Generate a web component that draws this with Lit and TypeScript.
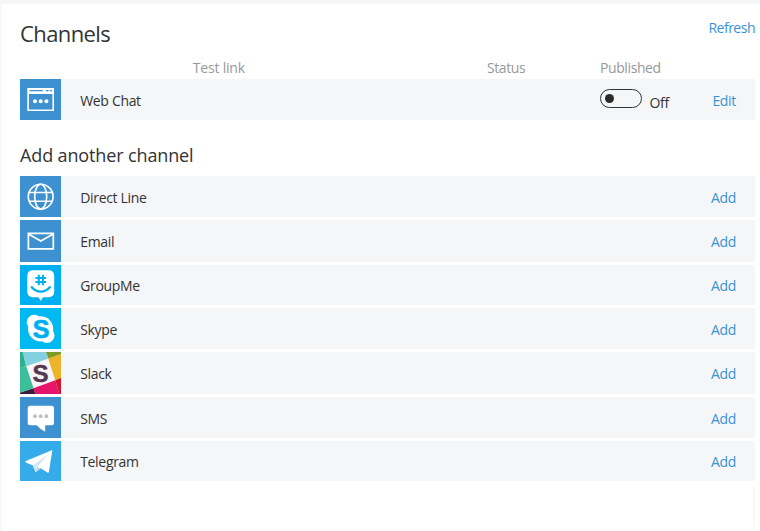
import { LitElement, html, css, svg } from "lit";
import { customElement, property } from "lit/decorators.js";

const icons: Record<string, unknown> = {
  webchat: svg`
    <rect width="41" height="42" fill="#3d91d1"/>
    <path d="M7.3 9H34V32H7.3Z M8.9 15V30.4H32.4V15Z" fill="#fff" fill-rule="evenodd"/>
    <path d="M9.5 11.7H22.8M26 11.7H28.6M29.8 11.7H32" stroke="#3d91d1" stroke-width="1.3"/>
    <g fill="#fff"><circle cx="15" cy="22.3" r="2"/><circle cx="20.7" cy="22.3" r="2"/><circle cx="26.4" cy="22.3" r="2"/></g>`,
  directline: svg`
    <rect width="41" height="42" fill="#3d91d1"/>
    <g fill="none" stroke="#fff" stroke-width="1.6">
      <circle cx="20.7" cy="20.7" r="12.4"/>
      <ellipse cx="20.7" cy="20.7" rx="6" ry="12.4"/>
      <path d="M9 16.5H32.4M9 25.3H32.4"/>
    </g>`,
  email: svg`
    <rect width="41" height="42" fill="#3d91d1"/>
    <path d="M8.4 13.3H33.3V28.9H8.4ZM8.4 14L20.8 21L33.3 14" fill="none" stroke="#fff" stroke-width="1.7"/>`,
  groupme: svg`
    <rect width="41" height="42" fill="#00aff0"/>
    <path d="M13 5.3H28.6Q34.2 5.3 34.2 11V26.6Q34.2 32.3 28.6 32.3H23.2L20.8 35.8L18.4 32.3H13Q7.3 32.3 7.3 26.6V11Q7.3 5.3 13 5.3Z" fill="#fff"/>
    <path d="M18.8 9.8V20.2M22.9 9.8V20.2M15.5 12.9H26.1M15.5 17.1H26.1" stroke="#00aff0" stroke-width="2"/>
    <path d="M11.8 22.3Q15.5 26.6 20.8 26.6T29.8 22.3" fill="none" stroke="#00aff0" stroke-width="2.4" stroke-linecap="round"/>`,
  skype: svg`
    <rect width="41" height="42" fill="#00b9f0"/>
    <g fill="#fff"><circle cx="20.6" cy="20.8" r="12.6"/><circle cx="14.2" cy="14.2" r="7.5"/><circle cx="27" cy="27.4" r="7.5"/></g>
    <text class="skype-s" x="20.9" y="29.6" text-anchor="middle">S</text>`,
  slack: svg`
    <rect width="41" height="42" fill="#f7f5f5"/>
    <path d="M0 0H3L6 14L0 16Z" fill="#2fb08c"/>
    <path d="M2.7 0H26L28.5 6.5L6.3 14.2Z" fill="#83d1de"/>
    <path d="M26 0H41V2.2L28.5 6.5Z" fill="#7f9a29"/>
    <path d="M28.2 6.6L41 2.2V26L35.3 28.2Z" fill="#ecb428"/>
    <path d="M35.3 28.2L41 26V42H39.3Z" fill="#d4152d"/>
    <path d="M13.5 36.2L35.3 28.2L39.5 42H15.3Z" fill="#e5156c"/>
    <path d="M0 40.5L13.5 36.2L15.3 42H0Z" fill="#41193f"/>
    <path d="M0 15.8L6.2 14L13.5 36.2L0 40.7Z" fill="#3cbf9a"/>
    <text class="slack-s" x="20.3" y="29.8" text-anchor="middle">S</text>`,
  sms: svg`
    <rect width="41" height="42" fill="#3d91d1"/>
    <path d="M10.2 8.8H31.5Q34 8.8 34 11.3V25.7Q34 28.2 31.5 28.2H25.2V34.7Q20.3 32.3 16.6 28.2H10.2Q7.7 28.2 7.7 25.7V11.3Q7.7 8.8 10.2 8.8Z" fill="#fff"/>
    <g fill="#b9bfc5"><circle cx="15" cy="19.2" r="1.9"/><circle cx="20.7" cy="19.2" r="1.9"/><circle cx="26.4" cy="19.2" r="1.9"/></g>`,
  telegram: svg`
    <rect width="41" height="42" fill="#36abe9"/>
    <path d="M5.2 20.3L32.4 9L28.8 31.2Q28.3 32.1 27.3 31.5L20.7 27.2L15.6 31.2L13 24.6L5.8 21.6Z" fill="#fff"/>
    <path d="M13 24.6L28.5 12.8L17.2 26L15.6 31.2Z" fill="#d6e5f1"/>
    <path d="M17.2 26L15.6 31.2L20.7 27.5Z" fill="#b9d4e8"/>`,
};

@customElement("channel-row")
export class ChannelRow extends LitElement {
  @property() name = "";
  @property() icon = "";
  @property() action = "Add";
  @property({ type: Boolean }) toggle = false;

  static styles = css`
    :host { display: grid; grid-template-columns: 60.2px 519.8px 1fr auto; align-items: center; background: #f5f6f8; padding-right: 19px; min-height: 0; overflow: hidden; }
    .icon { width: 41px; height: 100%; overflow: hidden; }
    .icon svg { display: block; width: 41px; height: 42px; }
    .name, .link { line-height: 20px; padding-top: 2px; }
    .link { color: #3b92d3; }
    .switch { display: flex; align-items: center; gap: 8px; }
    .track { box-sizing: border-box; width: 42px; height: 19px; border: 1.4px solid #333; border-radius: 10px; display: flex; align-items: center; padding-left: 4px; margin-top: -3px; }
    .knob { width: 9px; height: 9px; border-radius: 50%; background: #2b2b2b; }
    .state { line-height: 20px; padding-top: 7px; margin-left: -0.5px; }
    .skype-s { font: 700 25px "Liberation Sans", sans-serif; fill: #00aff0; stroke: #00aff0; stroke-width: 0.7; stroke-linejoin: round; }
    .slack-s { font: 700 24px "Liberation Sans", sans-serif; fill: #563753; stroke: #563753; stroke-width: 0.5; }
  `;

  render() {
    return html`
      <div class="icon"><svg viewBox="0 0 41 42" aria-hidden="true">${icons[this.icon]}</svg></div>
      <span class="name">${this.name}</span>
      <div class="switch">
        ${this.toggle ? html`<span class="track"><span class="knob"></span></span><span class="state">Off</span>` : ""}
      </div>
      <span class="link">${this.action}</span>`;
  }
}

const available = [
  ["Direct Line", "directline"],
  ["Email", "email"],
  ["GroupMe", "groupme"],
  ["Skype", "skype"],
  ["Slack", "slack"],
  ["SMS", "sms"],
  ["Telegram", "telegram"],
];

@customElement("app-root")
export class AppRoot extends LitElement {
  static styles = css`
    :host { display: flex; flex-direction: column; box-sizing: border-box; width: 760px; height: 531px; overflow: hidden; border-top: 4px solid #f5f6f8; border-left: 2px solid #f7f8f9; padding: 0 5px 0 18px; background: #fff; color: #333; font: 14px "Open Sans", "Noto Sans", sans-serif; letter-spacing: -0.32px; }
    .head { display: flex; justify-content: space-between; height: 52px; }
    .title { margin: 0; font-size: 22px; font-weight: 400; line-height: 30px; padding-top: 14px; letter-spacing: -0.6px; }
    .refresh { color: #3b92d3; line-height: 20px; padding-top: 14px; letter-spacing: -0.5px; }
    .columns { display: grid; grid-template-columns: 172.8px 294.2px 113px 1fr; height: 23px; line-height: 24px; color: #999; letter-spacing: -0.4px; }
    .columns .first { letter-spacing: -0.2px; }
    .published { height: 41px; }
    .subtitle { margin: 0; font-size: 18px; font-weight: 400; line-height: 24px; height: 56px; box-sizing: border-box; padding-top: 23px; letter-spacing: -0.13px; }
    .list { display: grid; grid-template-rows: 41px 42px 40px 41px 42px 41px 40px; row-gap: 3px; }
    .edge { align-self: flex-end; width: 2px; height: 42px; margin-top: 3px; background: #f7f8f9; }
  `;

  render() {
    return html`
      <div class="head"><h1 class="title">Channels</h1><span class="refresh">Refresh</span></div>
      <div class="columns"><span></span><span class="first">Test link</span><span>Status</span><span>Published</span></div>
      <channel-row class="published" name="Web Chat" icon="webchat" action="Edit" toggle></channel-row>
      <h2 class="subtitle">Add another channel</h2>
      <div class="list">
        ${available.map(([name, icon]) => html`<channel-row name=${name} icon=${icon}></channel-row>`)}
      </div>
      <div class="edge"></div>`;
  }
}
